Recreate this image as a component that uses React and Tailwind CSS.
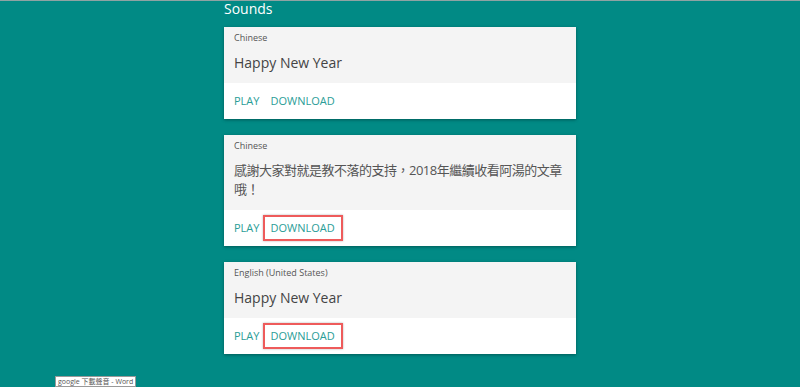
const sounds = [
  { lang: 'Chinese', text: 'Happy New Year', marked: false },
  { lang: 'Chinese', text: '感謝大家對就是教不落的支持，2018年繼續收看阿湯的文章哦！', marked: true, cjk: true },
  { lang: 'English (United States)', text: 'Happy New Year', marked: true },
];

const SoundCard = ({ lang, text, marked, cjk }) => (
  <div className="bg-white shadow-[0_1px_3px_rgba(0,0,0,0.35)]">
    <div className="bg-[#f4f4f4] px-[10px] pt-[5px] pb-[11px]">
      <div className="text-[9px] leading-[12px] text-[#555]">{lang}</div>
      <div
        className={
          cjk
            ? 'mt-[9px] text-[13px] leading-[19px] tracking-[-0.5px] text-[#555]'
            : 'mt-[9px] text-[14px] leading-[19px] text-[#444]'
        }
      >
        {text}
      </div>
    </div>
    <div className="flex h-[36px] items-center gap-[11px] px-[10px] pt-[1px] text-[11px] text-[#2a9d97]">
      <span>PLAY</span>
      <span className="relative">
        DOWNLOAD
        {marked && (
          <span className="absolute -left-[7px] -right-[8px] -top-[5px] -bottom-[4px] border-2 border-[#ee5b5b] shadow-[0_0_2px_rgba(0,0,0,0.3)]"></span>
        )}
      </span>
    </div>
  </div>
);

export default function App() {
  return (
    <div
      className="relative h-[387px] w-[800px] overflow-hidden bg-[#018a85]"
      style={{ fontFamily: '"Open Sans", "Noto Sans CJK TC", sans-serif' }}
    >
      <div className="h-px bg-[#8fa3a3]"></div>
      <div className="mx-auto w-[352px]">
        <h2 className="text-[14px] leading-[16px] text-white">Sounds</h2>
        <div className="mt-[10px] flex flex-col gap-[16px]">
          {sounds.map((s, i) => (
            <SoundCard key={i} {...s} />
          ))}
        </div>
      </div>
      <div className="absolute left-[55px] top-[376px] border border-[#999] bg-white px-[2px] text-[7px] leading-[9px] text-[#555]">
        google 下載聲音 - Word
      </div>
    </div>
  );
}
